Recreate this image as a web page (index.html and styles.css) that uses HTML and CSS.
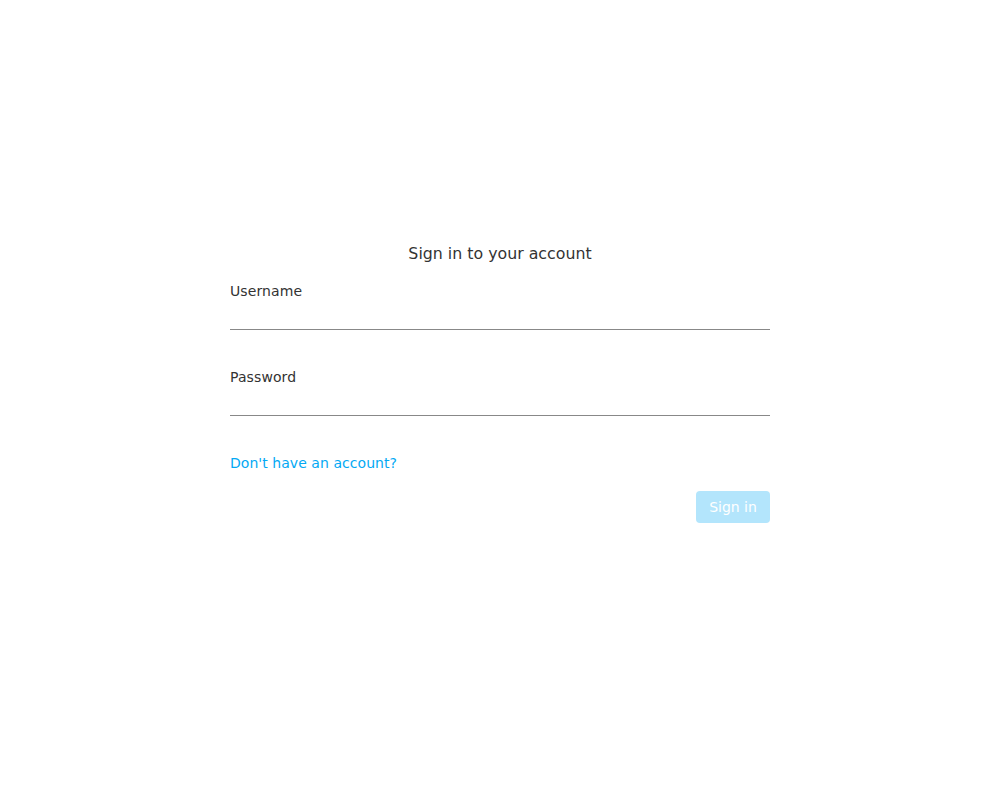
FILE: index.html
```html
<!DOCTYPE html>
<html>
<head>
<meta charset="utf-8">
<link rel="stylesheet" href="styles.css">
</head>
<body>
<div class="page">
  <form class="form">
    <h1 class="title">Sign in to your account</h1>
    <div class="field">
      <label class="label">Username</label>
      <input class="input" type="text">
    </div>
    <div class="field">
      <label class="label">Password</label>
      <input class="input" type="password">
    </div>
    <a class="link" href="#">Don't have an account?</a>
    <div class="actions">
      <button class="btn" type="button">Sign in</button>
    </div>
  </form>
</div>
</body>
</html>
```
FILE: styles.css
```css
html, body {
  margin: 0;
  padding: 0;
  background: #fff;
  font-family: "DejaVu Sans", sans-serif;
  color: #333;
}
.page {
  display: flex;
  justify-content: center;
  padding-top: 244px;
}
.form {
  width: 540px;
  display: flex;
  flex-direction: column;
}
.title {
  margin: 0;
  font-size: 15.8px;
  line-height: 20px;
  font-weight: normal;
  text-align: center;
  color: #333;
}
.field {
  display: flex;
  flex-direction: column;
  margin-top: 19px;
}
.field + .field {
  margin-top: 39px;
}
.label {
  font-size: 14px;
  line-height: 16px;
  letter-spacing: 0.1px;
  color: #333;
}
.input {
  height: 31px;
  box-sizing: border-box;
  border: none;
  border-bottom: 1px solid #888;
  padding: 0;
  margin: 0;
  outline: none;
  background: transparent;
  font-family: inherit;
  font-size: 14px;
}
.link {
  margin-top: 39px;
  font-size: 14px;
  line-height: 16px;
  letter-spacing: 0.05px;
  color: #03a9f4;
  text-decoration: none;
  align-self: flex-start;
}
.actions {
  display: flex;
  justify-content: flex-end;
  margin-top: 20px;
}
.btn {
  width: 74px;
  height: 32px;
  border: none;
  border-radius: 4px;
  background: #b3e5fc;
  color: #fff;
  font-family: inherit;
  font-size: 14px;
  padding: 0;
}
```
